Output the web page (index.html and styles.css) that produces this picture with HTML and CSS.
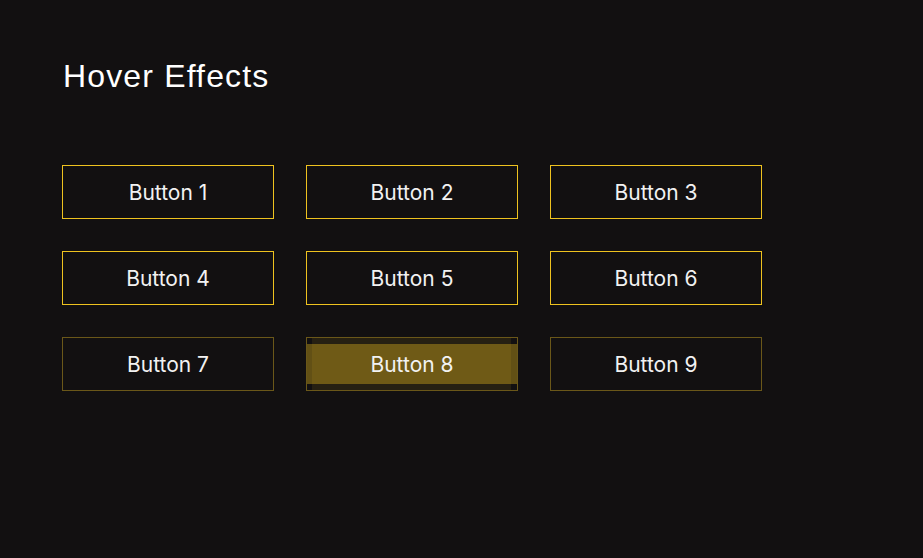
FILE: index.html
```html
<!DOCTYPE html>
<html>
<head>
<meta charset="utf-8">
<link rel="stylesheet" href="styles.css">
</head>
<body>
<main class="page">
  <h1 class="title">Hover Effects</h1>
  <div class="grid">
    <button class="btn"><span class="label">Button 1</span></button>
    <button class="btn"><span class="label">Button 2</span></button>
    <button class="btn"><span class="label">Button 3</span></button>
    <button class="btn"><span class="label">Button 4</span></button>
    <button class="btn"><span class="label">Button 5</span></button>
    <button class="btn"><span class="label">Button 6</span></button>
    <button class="btn dim"><span class="label">Button 7</span></button>
    <button class="btn dim active"><span class="label">Button 8</span></button>
    <button class="btn dim"><span class="label">Button 9</span></button>
  </div>
</main>
</body>
</html>
```
FILE: styles.css
```css
html, body {
  margin: 0;
  padding: 0;
  background: #121011;
  height: 100%;
}
.page {
  padding: 58px 62px;
}
.title {
  margin: 0;
  font-family: "Liberation Sans", Arial, sans-serif;
  font-weight: 400;
  font-size: 32px;
  line-height: 37px;
  letter-spacing: 1.15px;
  color: #ffffff;
  padding-left: 1px;
}
.grid {
  margin-top: 70px;
  display: grid;
  grid-template-columns: repeat(3, 212px);
  grid-auto-rows: 54px;
  gap: 32px;
}
.btn {
  position: relative;
  margin: 0;
  padding: 0;
  background: transparent;
  border: 1px solid #eec21f;
  color: #f2f2f2;
  font-family: Inter, "Noto Sans", sans-serif;
  font-size: 21px;
  font-weight: 400;
  cursor: pointer;
}
.btn.dim {
  border-color: #6a5719;
}
.label {
  position: relative;
  z-index: 2;
}
.btn.active::before {
  content: "";
  position: absolute;
  top: 0;
  bottom: 0;
  left: 5px;
  right: 6px;
  background: rgba(240, 195, 30, 0.09);
  z-index: 1;
}
.btn.active::after {
  content: "";
  position: absolute;
  top: 6px;
  bottom: 6px;
  left: 0;
  right: 0;
  background: rgba(240, 195, 30, 0.36);
  z-index: 1;
}
```
